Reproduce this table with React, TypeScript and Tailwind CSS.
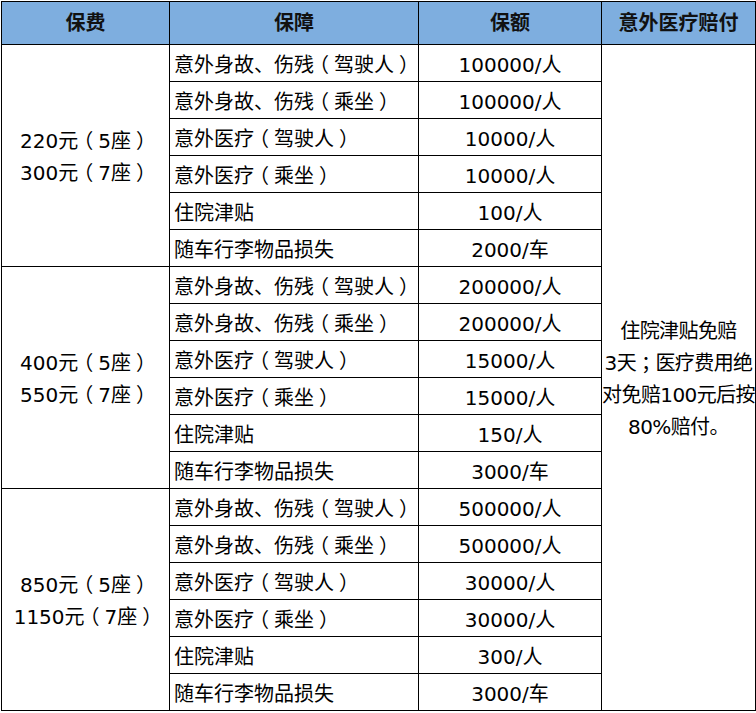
import React from 'react';

type Group = {
  price: string[];
  rows: [string, string][];
};

const groups: Group[] = [
  {
    price: ['220元（5座）', '300元（7座）'],
    rows: [
      ['意外身故、伤残（驾驶人）', '100000/人'],
      ['意外身故、伤残（乘坐）', '100000/人'],
      ['意外医疗（驾驶人）', '10000/人'],
      ['意外医疗（乘坐）', '10000/人'],
      ['住院津贴', '100/人'],
      ['随车行李物品损失', '2000/车'],
    ],
  },
  {
    price: ['400元（5座）', '550元（7座）'],
    rows: [
      ['意外身故、伤残（驾驶人）', '200000/人'],
      ['意外身故、伤残（乘坐）', '200000/人'],
      ['意外医疗（驾驶人）', '15000/人'],
      ['意外医疗（乘坐）', '15000/人'],
      ['住院津贴', '150/人'],
      ['随车行李物品损失', '3000/车'],
    ],
  },
  {
    price: ['850元（5座）', '1150元（7座）'],
    rows: [
      ['意外身故、伤残（驾驶人）', '500000/人'],
      ['意外身故、伤残（乘坐）', '500000/人'],
      ['意外医疗（驾驶人）', '30000/人'],
      ['意外医疗（乘坐）', '30000/人'],
      ['住院津贴', '300/人'],
      ['随车行李物品损失', '3000/车'],
    ],
  },
];

const note = ['住院津贴免赔', '3天；医疗费用绝', '对免赔100元后按', '80%赔付。'];

// the source font centres full-width brackets and semicolons in their box:
// take the half-width glyph and pad it back out to a full em
const Punct = ({ text }: { text: string }) => (
  <>
    {text.split(/([（）；])/).map((part, i) =>
      part === '（' || part === '）' || part === '；' ? (
        <span key={i} className="px-[0.25em] [font-feature-settings:'halt']">
          {part}
        </span>
      ) : (
        <React.Fragment key={i}>{part}</React.Fragment>
      )
    )}
  </>
);

const App = () => {
  const totalRows = groups.reduce((n, g) => n + g.rows.length, 0);

  return (
    <div
      className="bg-white pl-px pt-px text-[20px] text-black"
      style={{ fontFamily: '"DejaVu Sans", "Noto Sans CJK SC", sans-serif' }}
    >
      <table className="table-fixed border-collapse w-[754px]">
        <colgroup>
          <col className="w-[168px]" />
          <col className="w-[249px]" />
          <col className="w-[183px]" />
          <col className="w-[154px]" />
        </colgroup>
        <thead>
          <tr className="h-[43px] bg-[#7eaedf] font-bold text-[#111]">
            <th className="border border-black p-0 text-center">保费</th>
            <th className="border border-black p-0 text-center">保障</th>
            <th className="border border-black p-0 text-center">保额</th>
            <th className="border border-black p-0 text-center">意外医疗赔付</th>
          </tr>
        </thead>
        <tbody>
          {groups.map((group, gi) =>
            group.rows.map(([item, amount], ri) => (
              <tr key={`${gi}-${ri}`} className="h-[37px]">
                {ri === 0 && (
                  <td
                    rowSpan={group.rows.length}
                    className="border border-black pt-[2px] pb-0 px-0 text-center leading-[32px] whitespace-nowrap"
                  >
                    {group.price.map((p) => (
                      <div key={p}>
                        <Punct text={p} />
                      </div>
                    ))}
                  </td>
                )}
                <td className="border border-black pt-[3px] pb-0 pl-1 pr-0 text-left whitespace-nowrap leading-none">
                  <Punct text={item} />
                </td>
                <td className="border border-black pt-[3px] pb-0 px-0 text-center whitespace-nowrap leading-none">
                  {amount}
                </td>
                {gi === 0 && ri === 0 && (
                  <td
                    rowSpan={totalRows}
                    className="border border-black pt-[2px] pb-0 px-0 text-center leading-[32px] tracking-[-0.6px] whitespace-nowrap"
                  >
                    {note.map((line) => (
                      <div key={line}>
                        <Punct text={line} />
                      </div>
                    ))}
                  </td>
                )}
              </tr>
            ))
          )}
        </tbody>
      </table>
    </div>
  );
};

export default App;
